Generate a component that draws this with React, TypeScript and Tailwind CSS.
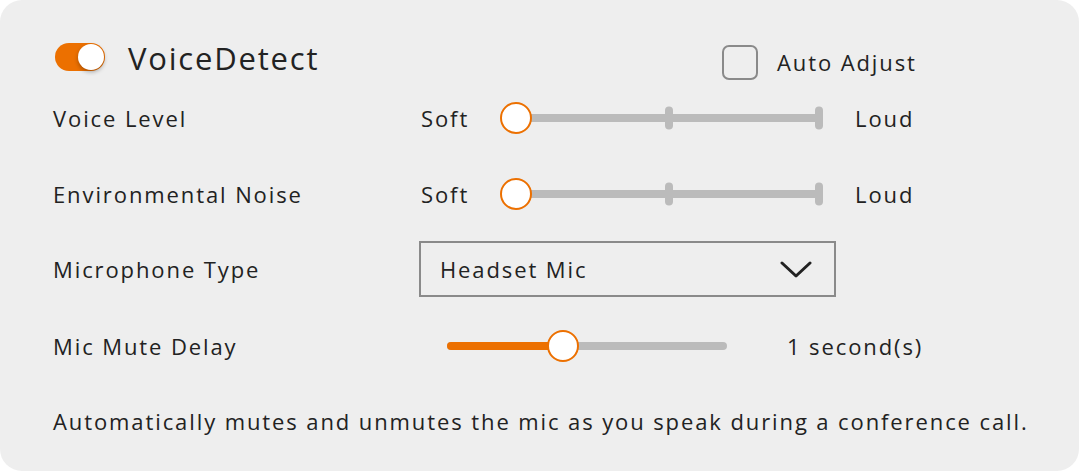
import React from "react";

const ORANGE = "bg-[#ec7000]";

function Toggle({ on }: { on: boolean }) {
  return (
    <div
      className={`relative h-[28px] w-[50px] rounded-full ${on ? ORANGE : "bg-[#bbbbbb]"}`}
    >
      <div
        className={`absolute top-[1px] h-[26px] w-[26px] rounded-full bg-white shadow-[0_2px_4px_rgba(0,0,0,0.3)] ${on ? "left-[23px]" : "left-[1px]"}`}
      />
    </div>
  );
}

function Thumb({ left }: { left: number }) {
  return (
    <div
      className="absolute top-1/2 h-[32px] w-[32px] -translate-x-1/2 -translate-y-1/2 rounded-full border-2 border-[#ec7000] bg-white"
      style={{ left }}
    />
  );
}

function LevelSlider() {
  // thumb sits at the "Soft" end, ticks at mid and end
  return (
    <div className="relative h-[40px] w-[324px]">
      <div className="absolute left-[16px] right-[2px] top-1/2 h-[8px] -translate-y-1/2 rounded-full bg-[#bbbbbb]" />
      <div className="absolute left-[165px] top-1/2 h-[23px] w-[8px] -translate-y-1/2 rounded-full bg-[#bbbbbb]" />
      <div className="absolute left-[315px] top-1/2 h-[23px] w-[8px] -translate-y-1/2 rounded-full bg-[#bbbbbb]" />
      <Thumb left={16} />
    </div>
  );
}

function DelaySlider({ value }: { value: number }) {
  const width = 280;
  const pos = Math.round(width * value);
  return (
    <div className="relative h-[40px] w-[280px]">
      <div className="absolute inset-x-0 top-1/2 h-[8px] -translate-y-1/2 rounded-full bg-[#bbbbbb]" />
      <div
        className="absolute left-0 top-1/2 h-[8px] -translate-y-1/2 rounded-full bg-[#ec7000]"
        style={{ width: pos }}
      />
      <Thumb left={pos} />
    </div>
  );
}

function Label({ children }: { children: React.ReactNode }) {
  return <div className="w-[368px] shrink-0">{children}</div>;
}

export default function App() {
  return (
    <div className="h-[471px] w-[1079px] bg-white">
      <div
        className="flex h-full w-full flex-col rounded-[22px] bg-[#eeeeee] pl-[53px] text-[22px] tracking-[1.9px] text-[#222222]"
        style={{ fontFamily: '"Open Sans", "Noto Sans", sans-serif' }}
      >
        {/* header */}
        <div className="mt-[40px] flex h-[40px] items-start">
          <div className="flex w-[669px] shrink-0 items-start">
            <div className="ml-[2px] mt-[3px]">
              <Toggle on />
            </div>
            <div className="ml-[23px] text-[31px] leading-[36px] tracking-[1.8px]">VoiceDetect</div>
          </div>
          <div className="mt-[5px] flex items-center">
            <div className="h-[35px] w-[36px] rounded-[7px] border-2 border-[#8a8a8a]" />
            <span className="ml-[19px] leading-[35px]">Auto Adjust</span>
          </div>
        </div>

        <div className="mt-[18px] flex h-[40px] items-center">
          <Label>Voice Level</Label>
          <span className="w-[79px]">Soft</span>
          <LevelSlider />
          <span className="ml-[31px]">Loud</span>
        </div>

        <div className="mt-[36px] flex h-[40px] items-center">
          <Label>Environmental Noise</Label>
          <span className="w-[79px]">Soft</span>
          <LevelSlider />
          <span className="ml-[31px]">Loud</span>
        </div>

        <div className="mt-[27px] flex h-[56px] items-center">
          <Label>Microphone Type</Label>
          <div className="-ml-[2px] flex h-[56px] w-[417px] items-center border-2 border-[#8a8a8a] pl-[19px] pr-[22px]">
            <span>Headset Mic</span>
            <svg
              className="ml-auto"
              width="32"
              height="17"
              viewBox="0 0 32 17"
              fill="none"
              stroke="#222222"
              strokeWidth="3"
              strokeLinecap="round"
              strokeLinejoin="round"
            >
              <path d="M2 2 L16 15 L30 2" />
            </svg>
          </div>
        </div>

        <div className="mt-[29px] flex h-[40px] items-center">
          <Label>Mic Mute Delay</Label>
          <div className="ml-[26px]">
            <DelaySlider value={0.415} />
          </div>
          <span className="ml-[60px]">1 second(s)</span>
        </div>

        <div className="mt-[40px] leading-[30px]">
          Automatically mutes and unmutes the mic as you speak during a conference call.
        </div>
      </div>
    </div>
  );
}
